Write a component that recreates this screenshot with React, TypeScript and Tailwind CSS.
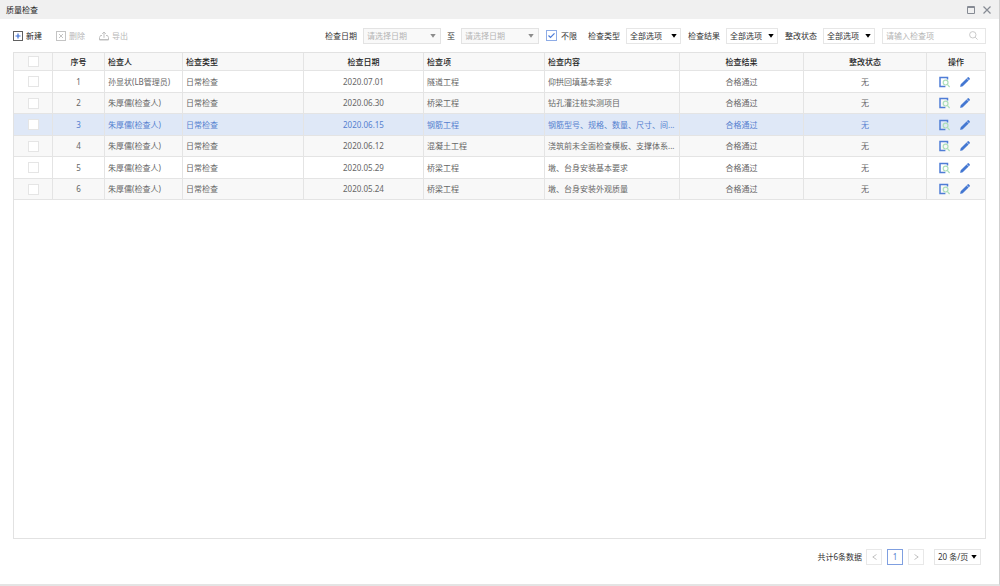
import React from "react";

type Row = {
  id: number;
  person: string;
  date: string;
  item: string;
  content: string;
};

const rows: Row[] = [
  { id: 1, person: "孙显状(LB管理员)", date: "2020.07.01", item: "隧道工程", content: "仰拱回填基本要求" },
  { id: 2, person: "朱厚儒(检查人)", date: "2020.06.30", item: "桥梁工程", content: "钻孔灌注桩实测项目" },
  { id: 3, person: "朱厚儒(检查人)", date: "2020.06.15", item: "钢筋工程", content: "钢筋型号、规格、数量、尺寸、间..." },
  { id: 4, person: "朱厚儒(检查人)", date: "2020.06.12", item: "混凝土工程", content: "浇筑前未全面检查模板、支撑体系..." },
  { id: 5, person: "朱厚儒(检查人)", date: "2020.05.29", item: "桥梁工程", content: "墩、台身安装基本要求" },
  { id: 6, person: "朱厚儒(检查人)", date: "2020.05.24", item: "桥梁工程", content: "墩、台身安装外观质量" },
];

const headers = ["序号", "检查人", "检查类型", "检查日期", "检查项", "检查内容", "检查结果", "整改状态", "操作"];
const leftAligned = ["检查人", "检查类型", "检查项", "检查内容"];
const selectedId = 3;

function Caret({ className }: { className: string }) {
  return (
    <svg viewBox="0 0 6 4" className={`pointer-events-none absolute top-1/2 h-1 w-[6px] -translate-y-1/2 ${className}`} fill="currentColor" aria-hidden="true">
      <path d="M.3 0h5.4L3 3.7z" />
    </svg>
  );
}

function DateBox({ label }: { label: string }) {
  return (
    <span className="relative block w-[78px]">
      <input
        type="text"
        disabled
        aria-label={label}
        placeholder="请选择日期"
        className="block h-4 w-full border border-[#e3e3e3] bg-[#f9f9f9] pr-3 pl-[3px] placeholder:text-[#b4b4b4]"
      />
      <Caret className="right-[5px] text-[#8c8c8c]" />
    </span>
  );
}

function FilterSelect({ id, label, width }: { id: string; label: string; width: string }) {
  return (
    <div className="flex items-center gap-[6px]">
      <label htmlFor={id}>{label}</label>
      <span className={`relative block ${width}`}>
        <select id={id} className="block h-4 w-full appearance-none border border-[#e6e6e6] bg-white pl-[3px]">
          <option>全部选项</option>
        </select>
        <Caret className="right-1 text-black" />
      </span>
    </div>
  );
}

function AddIcon() {
  return (
    <svg viewBox="0 0 10 10" className="size-[10px]" fill="none" aria-hidden="true">
      <rect x=".5" y=".5" width="9" height="9" stroke="#606060" />
      <path d="M5 2.5v5M2.5 5h5" stroke="#3f70d6" strokeWidth="1.2" />
    </svg>
  );
}

function DeleteIcon() {
  return (
    <svg viewBox="0 0 10 10" className="size-[10px]" fill="none" stroke="#c4c4c4" aria-hidden="true">
      <rect x=".5" y=".5" width="9" height="9" />
      <path d="M3 3l4 4M7 3L3 7" />
    </svg>
  );
}

function ExportIcon() {
  return (
    <svg viewBox="0 0 10 10" className="size-[10px]" fill="none" stroke="#c0c0c0" aria-hidden="true">
      <path d="M3 4.5H1.5L.5 6.5v2.5h9V6.5l-1-2H7M.5 8.5h9M5 6.8V1M3.2 2.8L5 1l1.8 1.8" />
    </svg>
  );
}

function ViewIcon() {
  return (
    <svg viewBox="0 0 11 12" className="h-3 w-[11px]" fill="none" aria-hidden="true">
      <path d="M8.5 3.4V1.5H1v9h5.4" stroke="#4f7dd6" strokeWidth="1.5" />
      <circle cx="6.6" cy="6.6" r="2.4" stroke="#addfba" strokeWidth="1.2" />
      <path d="M8.3 8.4l2.3 2.6" stroke="#addfba" strokeWidth="1.2" />
    </svg>
  );
}

function EditIcon() {
  return (
    <svg viewBox="0 0 10 10" className="size-[10px]" fill="#4377d2" stroke="#4377d2" strokeWidth=".4" strokeLinejoin="round" aria-hidden="true">
      <path d="M.4 9.7l.5-2.4L6.6 1.7l1.8 1.8-5.7 5.6zM7.1 1.2l.7-.7c.3-.3.7-.3 1 0l.8.8c.3.3.3.7 0 1l-.7.7z" />
    </svg>
  );
}

function Tick() {
  return <input type="checkbox" aria-label="选择" className="mx-auto block size-[11px] appearance-none border border-[#e5e5e5] bg-white" />;
}

export default function App() {
  return (
    <main className="flex min-h-screen flex-col border-r border-b-2 border-r-[#cfcfcf] border-b-[#e4e4e4] bg-white font-['Noto_Sans','Noto_Sans_CJK_SC',sans-serif] text-[8px] leading-3 text-[#333]">
      <header className="flex h-[19px] items-center justify-between bg-[#f0f0f0] pr-2 pl-[6px]">
        <h1 className="font-normal text-[#222]">质量检查</h1>
        <div className="flex items-center gap-2 text-[#868b94]">
          <button type="button" aria-label="最大化">
            <svg viewBox="0 0 8 8" className="size-2" fill="none" stroke="currentColor" aria-hidden="true">
              <path d="M.5.5h7v7h-7zM0 1.5h8" />
            </svg>
          </button>
          <button type="button" aria-label="关闭">
            <svg viewBox="0 0 8 8" className="size-2" fill="none" stroke="currentColor" strokeWidth="1.2" aria-hidden="true">
              <path d="M.5.5l7 7M7.5.5l-7 7" />
            </svg>
          </button>
        </div>
      </header>

      <div className="flex h-[33px] items-center justify-between px-[13px] whitespace-nowrap">
        <div className="flex items-center gap-[14px]">
          <button type="button" className="flex items-center gap-[3px] text-[#222]"><AddIcon />新建</button>
          <button type="button" disabled className="flex items-center gap-[3px] text-[#b8b8b8]"><DeleteIcon />删除</button>
          <button type="button" disabled className="flex items-center gap-[3px] text-[#b8b8b8]"><ExportIcon />导出</button>
        </div>

        <div className="flex items-center gap-[7px]">
          <div className="flex items-center gap-[6px]">
            <span>检查日期</span>
            <DateBox label="开始日期" />
            <span>至</span>
            <DateBox label="结束日期" />
          </div>
          <label className="mr-1 flex items-center gap-1">
            <span className="relative block size-[11px]">
              <input type="checkbox" defaultChecked className="block size-[11px] appearance-none border border-[#8eace6] bg-white" />
              <svg viewBox="0 0 11 11" className="pointer-events-none absolute inset-0 size-[11px]" fill="none" stroke="#4b7bd8" strokeWidth="1.2" aria-hidden="true">
                <path d="M2.5 5.5l2 2 4-4.2" />
              </svg>
            </span>
            不限
          </label>
          <FilterSelect id="type" label="检查类型" width="w-[55px]" />
          <FilterSelect id="result" label="检查结果" width="w-[52px]" />
          <FilterSelect id="status" label="整改状态" width="w-[52px]" />
          <span className="relative block w-[104px]">
            <input type="search" aria-label="检查项" placeholder="请输入检查项" className="block h-4 w-full appearance-none border border-[#e6e6e6] bg-white pr-5 pl-[3px] placeholder:text-[#b4b4b4]" />
            <svg viewBox="0 0 9 9" className="pointer-events-none absolute top-[3px] right-2 size-[9px]" fill="none" stroke="#c4c4c4" strokeWidth=".9" aria-hidden="true">
              <circle cx="3.8" cy="3.8" r="3.2" />
              <path d="M6.2 6.2l2.4 2.4" />
            </svg>
          </span>
        </div>
      </div>

      <section className="mx-[13px] flex-1 border border-[#e2e2e2]">
        <table className="w-full table-fixed border-separate border-spacing-0 text-[#666]">
          <colgroup>
            <col className="w-[39px]" />
            <col className="w-[52px]" />
            <col className="w-[78px]" />
            <col className="w-[121px]" />
            <col className="w-[120px]" />
            <col className="w-[121px]" />
            <col className="w-[135px]" />
            <col className="w-[124px]" />
            <col className="w-[123px]" />
            <col className="w-[58px]" />
          </colgroup>
          <thead>
            <tr className="h-[18px] bg-[#f8f8f8] text-[#222] [&>th]:border-r [&>th]:border-b [&>th]:border-[#e4e4e4] [&>th]:px-[3px] [&>th]:py-0 [&>th:last-child]:border-r-0">
              <th><Tick /></th>
              {headers.map((h) => (
                <th key={h} className={leftAligned.includes(h) ? "text-left font-medium" : "text-center font-medium"}>{h}</th>
              ))}
            </tr>
          </thead>
          <tbody>
            {rows.map((r) => (
              <tr
                key={r.id}
                className={`odd:h-[22px] even:h-[21px] [&>td]:border-r [&>td]:border-b [&>td]:border-[#e4e4e4] [&>td]:px-[3px] [&>td]:py-0 [&>td:last-child]:border-r-0 ${
                  r.id === selectedId ? "bg-[#dfe8f7] text-[#5580cf]" : "even:bg-[#f8f8f8]"
                }`}
              >
                <td><Tick /></td>
                <td className="text-center">{r.id}</td>
                <td className="whitespace-nowrap">{r.person}</td>
                <td>日常检查</td>
                <td className="text-center">{r.date}</td>
                <td>{r.item}</td>
                <td className="whitespace-nowrap">{r.content}</td>
                <td className="text-center">合格通过</td>
                <td className="text-center">无</td>
                <td>
                  <div className="flex items-center justify-center gap-[10px] pr-[3px]">
                    <button type="button" aria-label="查看"><ViewIcon /></button>
                    <button type="button" aria-label="编辑"><EditIcon /></button>
                  </div>
                </td>
              </tr>
            ))}
          </tbody>
        </table>
      </section>

      <footer className="flex h-[45px] items-center justify-end pr-[18px] pb-[9px] whitespace-nowrap">
        <span className="mr-1 text-[#333]">共计6条数据</span>
        <nav aria-label="分页" className="flex gap-[5px]">
          <button type="button" aria-label="上一页" className="flex size-4 items-center justify-center border border-[#e8e8e8] text-[#bbb]">
            <svg viewBox="0 0 5 8" className="h-2 w-[5px]" fill="none" stroke="currentColor" strokeWidth=".9" aria-hidden="true"><path d="M4.5 1.5L.8 4l3.7 2.5" /></svg>
          </button>
          <button type="button" aria-current="page" className="size-4 border border-[#7f9fe0] text-[#5580cf]">1</button>
          <button type="button" aria-label="下一页" className="flex size-4 items-center justify-center border border-[#e8e8e8] text-[#bbb]">
            <svg viewBox="0 0 5 8" className="h-2 w-[5px]" fill="none" stroke="currentColor" strokeWidth=".9" aria-hidden="true"><path d="M.5 1.5L4.2 4 .5 6.5" /></svg>
          </button>
        </nav>
        <span className="relative ml-[10px] block w-[47px]">
          <select aria-label="每页条数" className="block h-4 w-full appearance-none border border-[#e6e6e6] bg-white pl-[3px]">
            <option>20 条/页</option>
          </select>
          <Caret className="right-1 text-black" />
        </span>
      </footer>
    </main>
  );
}
